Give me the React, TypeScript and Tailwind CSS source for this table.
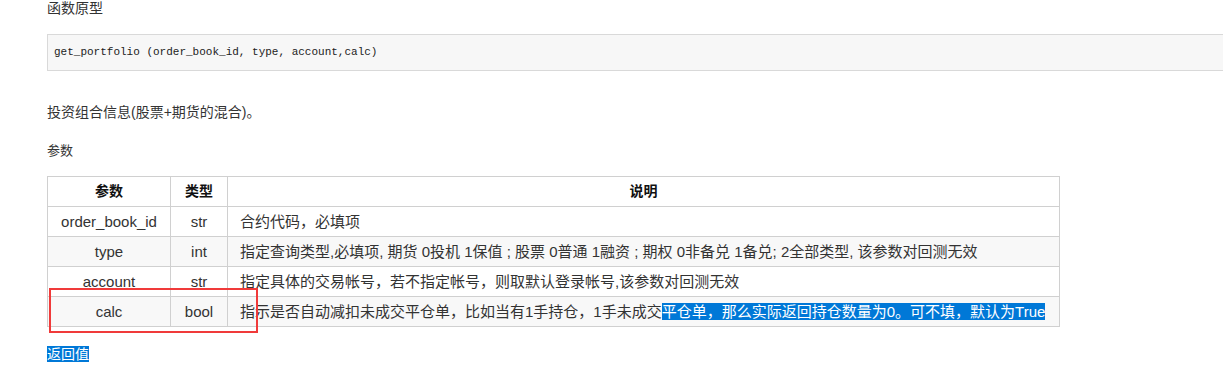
import React from 'react';

const rows = [
  { name: 'order_book_id', type: 'str', desc: '合约代码，必填项' },
  {
    name: 'type',
    type: 'int',
    desc: '指定查询类型,必填项, 期货 0投机 1保值 ; 股票 0普通 1融资 ; 期权 0非备兑 1备兑; 2全部类型, 该参数对回测无效',
  },
  { name: 'account', type: 'str', desc: '指定具体的交易帐号，若不指定帐号，则取默认登录帐号,该参数对回测无效' },
];

export default function App() {
  return (
    <div
      className="h-[366px] w-[1223px] overflow-hidden bg-white pl-[47px] text-[14px] text-[#333]"
      style={{ fontFamily: '"Liberation Sans", "Noto Sans CJK SC", sans-serif' }}
    >
      <p className="leading-[16px]">函数原型</p>

      {/* code block */}
      <div className="mt-[18px] flex h-[37px] w-[1200px] items-center border border-[#d9d9d9] bg-[#f7f7f7] pl-[6px]">
        <code className="font-['Liberation_Mono',monospace] text-[11px] text-[#222]">
          get_portfolio (order_book_id, type, account,calc)
        </code>
      </div>

      <p className="mt-[31px] leading-[20px]">投资组合信息(股票+期货的混合)。</p>
      <p className="mt-[19px] text-[13px] leading-[20px]">参数</p>

      <div className="relative mt-[15px] w-[1013px]">
        <table className="w-full table-fixed border-collapse text-[15px]">
          <colgroup>
            <col className="w-[123px]" />
            <col className="w-[57px]" />
            <col />
          </colgroup>
          <thead>
            <tr>
              <th className="border border-[#d0d0d0] py-[5px] text-center text-[14px] leading-[19px] font-bold text-[#111]">参数</th>
              <th className="border border-[#d0d0d0] py-[5px] text-center text-[14px] leading-[19px] font-bold text-[#111]">类型</th>
              <th className="border border-[#d0d0d0] py-[5px] text-center text-[14px] leading-[19px] font-bold text-[#111]">说明</th>
            </tr>
          </thead>
          <tbody>
            {rows.map((r, i) => (
              <tr key={r.name} className={i % 2 === 1 ? 'bg-[#f8f8f8]' : ''}>
                <td className="border border-[#d0d0d0] py-[5px] text-center leading-[19px]">{r.name}</td>
                <td className="border border-[#d0d0d0] py-[5px] text-center leading-[19px]">{r.type}</td>
                <td className="whitespace-nowrap border border-[#d0d0d0] px-3 py-[5px] leading-[19px]">{r.desc}</td>
              </tr>
            ))}
            <tr className="bg-[#f8f8f8]">
              <td className="border border-[#d0d0d0] py-[5px] text-center leading-[19px]">calc</td>
              <td className="border border-[#d0d0d0] py-[5px] text-center leading-[19px]">bool</td>
              <td className="whitespace-nowrap border border-[#d0d0d0] px-3 py-[5px] leading-[19px]">
                指示是否自动减扣未成交平仓单，比如当有1手持仓，1手未成交
                <span className="bg-[#0078d7] text-white">平仓单，那么实际返回持仓数量为0。可不填，默认为True</span>
              </td>
            </tr>
          </tbody>
        </table>

        {/* red annotation box */}
        <div className="absolute left-[2px] top-[112px] h-[45px] w-[209px] border-2 border-[#f03a3a]" />
      </div>

      <p className="mt-[17px] leading-[20px]">
        <span className="bg-[#0078d7] text-white">返回值</span>
      </p>
    </div>
  );
}
